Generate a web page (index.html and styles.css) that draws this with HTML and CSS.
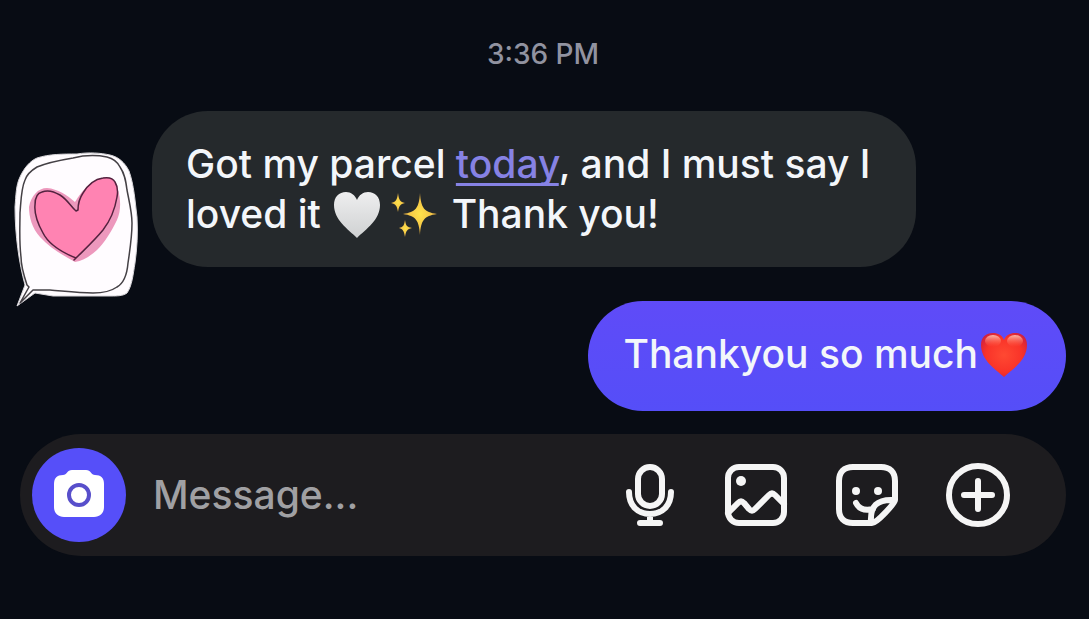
FILE: index.html
```html
<!DOCTYPE html>
<html lang="en">
<head>
<meta charset="utf-8">
<meta name="viewport" content="width=device-width, initial-scale=1">
<title>Chat</title>
<link rel="stylesheet" href="styles.css">
</head>
<body>
<main class="chat">
  <time class="timestamp" datetime="15:36">3:36 PM</time>

  <section class="thread" aria-label="Messages">
    <div class="row">
      <svg class="avatar" viewBox="0 0 127 156" role="img" aria-label="Pink heart in a speech bubble">
        <path d="M24 7C36 3 50 3 64 3C76 1 88 2 97 4C106 6 112 12 116 20C121 34 122 50 124 66C125 82 124 98 122 112C120 124 119 135 114 142C110 145 104 145 98 145L40 145L22 142L4 155L12 134C6 112 2 84 2 56C3 44 3 34 7 26C11 17 17 10 24 7Z" fill="#fffcff" stroke="#d8d6da"/>
        <path d="M16 56C18 45 25 37 34 37C45 38 54 44 62 51C70 38 79 29 90 27C99 26 105 31 105 39C108 49 108 60 104 69C98 81 92 91 84 99C77 105 70 110 62 111C49 104 36 96 27 86C19 77 16 66 16 56Z" fill="#ed98bd"/>
        <path d="M62 109C48 101 36 94 30 82C25 73 21 64 22 54C22 47 24 42 29 41C36 38 42 41 47 44C55 49 59 57 64 61C65 54 66 48 70 42C76 32 83 28 90 27C96 26 100 27 102 31C105 36 105 41 104 46C102 58 97 70 90 79C81 90 71 99 62 109Z" fill="#ff83b2"/>
        <path d="M63 107C48 101 36 94 30 82C25 73 21 64 22 54C22 47 24 42 29 41C36 38 42 41 47 44C55 49 58 56 63 60L65 59C65 54 66 48 70 42C76 32 83 28 90 27C96 26 100 27 102 31C105 36 105 41 104 46C102 58 97 70 90 79C81 90 71 99 61 109" fill="none" stroke="#54223f" stroke-width="1.5" stroke-linecap="round" stroke-linejoin="round"/>
        <path d="M14 134C11 125 8 116 8 106C6 90 7 76 7 62C8 50 8 38 12 29C14 23 19 19 24 16C36 11 48 9 60 7C72 4 84 4 94 6C102 8 105 12 107 16C112 23 113 31 114 39C116 50 119 61 119 72C119 86 117 99 115 112C114 124 111 132 104 136C97 141 89 142 80 142C65 142 50 140 37 139L20 139L7 152L16 136Z" fill="none" stroke="#444045" stroke-width="1.5" stroke-linejoin="round"/>
      </svg>
      <p class="bubble received">Got my parcel <a class="day" href="#">today</a>, and I must say I loved it
        <svg class="emoji" viewBox="0 0 48 48" role="img" aria-label="white heart">
          <defs><linearGradient id="silver" x2="0" y2="1"><stop stop-color="#eeeeef"/><stop offset="1" stop-color="#cfd1d2"/></linearGradient></defs>
          <path d="M24 47C15 38 1 29 1 14C1 6 6 1 13 1C18 1 22 4 24 9C26 4 30 1 35 1C42 1 47 6 47 14C47 29 33 38 24 47Z" fill="url(#silver)"/>
        </svg><svg class="emoji sparkles" viewBox="0 0 48 48" role="img" aria-label="sparkles">
          <defs><radialGradient id="gold"><stop stop-color="#ffe34b"/><stop offset="1" stop-color="#efb544"/></radialGradient></defs>
          <g fill="url(#gold)"><path d="M29 2C30 17 33 21 46 23C33 25 30 29 29 44C28 29 25 25 12 23C25 21 28 17 29 2Z"/><path d="M7 2C8 9 9 11 14 12C9 13 8 15 7 21C6 15 5 13 0 12C5 11 6 9 7 2Z"/><path d="M14 29C15 35 16 36 21 37C16 38 15 40 14 46C13 40 12 38 8 37C12 36 13 35 14 29Z"/></g>
        </svg>
        Thank you!</p>
    </div>

    <p class="bubble sent">Thankyou so much<svg class="emoji" viewBox="0 0 48 48" role="img" aria-label="red heart">
      <defs>
        <radialGradient id="red" cx=".5" cy=".5" r=".6"><stop stop-color="#ff4932"/><stop offset=".65" stop-color="#f93329"/><stop offset="1" stop-color="#cf2140"/></radialGradient>
        <linearGradient id="shine" x2="0" y2="1"><stop stop-color="#ffb6a6"/><stop offset="1" stop-color="#ff6047" stop-opacity="0"/></linearGradient>
      </defs>
      <path d="M24 46C15 38 1 29 1 14C1 6 6 2 13 2C18 2 22 4 24 9C26 4 30 2 35 2C42 2 47 6 47 14C47 29 33 38 24 46Z" fill="url(#red)"/>
      <ellipse cx="13" cy="10" rx="8" ry="6" fill="url(#shine)"/><ellipse cx="35" cy="10" rx="8" ry="6" fill="url(#shine)"/>
    </svg></p>
  </section>

  <form class="composer">
    <button class="camera" type="button" aria-label="Camera">
      <svg viewBox="0 0 52 50" width="52" height="50">
        <path d="M19 0H33C38 0 38 5 42 5C48 5 51 8 51 14V37C51 43 47 47 41 47H11C5 47 1 43 1 37V14C1 8 4 5 10 5C14 5 14 0 19 0Z" fill="#fff"/>
        <circle cx="26" cy="25" r="10" fill="none" stroke="#584fcb" stroke-width="4"/>
      </svg>
    </button>
    <input class="message" type="text" placeholder="Message..." aria-label="Message">
    <div class="tools">
      <button type="button" aria-label="Voice message">
        <svg viewBox="0 0 52 64" width="52" height="64"><rect x="13" y="4" width="24" height="39" rx="12"/><path d="M4 29C4 43 13 51 25 51S46 43 46 29M25 51V59M15 60H35"/></svg>
      </button>
      <button type="button" aria-label="Photo">
        <svg viewBox="0 0 64 64" width="64" height="64"><rect x="4" y="4" width="56" height="56" rx="11"/><path d="M4 50L14 40Q17 37 20 40L25 46Q28 49 31 46L45 32Q48 29 51 32L60 41"/><circle class="dot" cx="17" cy="18" r="5"/></svg>
      </button>
      <button type="button" aria-label="Sticker">
        <svg viewBox="0 0 64 64" width="64" height="64"><path d="M37 60H18C9 60 4 55 4 46V18C4 9 9 4 18 4H46C55 4 60 9 60 18V37C60 40 42 60 37 60ZM36 59C35 43 42 36 59 37M21 40C24 46 30 48 38 46"/><circle class="dot" cx="21" cy="28" r="4"/><circle class="dot" cx="43" cy="28" r="4"/></svg>
      </button>
      <button type="button" aria-label="More options">
        <svg viewBox="0 0 64 64" width="64" height="64"><circle cx="32" cy="32" r="29"/><path d="M32 18V46M18 32H46"/></svg>
      </button>
    </div>
  </form>
</main>
</body>
</html>
```
FILE: styles.css
```css
* {
  box-sizing: border-box;
}

body {
  margin: 0;
  background: #080c14;
  color: #f3f6fa;
  font-family: Inter, "Liberation Sans", sans-serif;
}

.chat {
  display: flex;
  flex-direction: column;
  min-height: 100vh;
  padding: 38px 23px 63px 20px;
}

.timestamp {
  align-self: center;
  color: #9193a0;
  font-size: 28px;
  font-weight: 500;
  line-height: 32px;
}

.thread {
  display: flex;
  flex-direction: column;
  gap: 34px;
  margin: 41px 0 23px;
}

.row {
  display: flex;
  align-items: flex-end;
  gap: 12px;
  margin-left: -7px;
}

.avatar {
  flex: none;
  width: 127px;
  height: 156px;
  margin-bottom: -40px;
}

.bubble {
  margin: 0;
  font-size: 39px;
  font-weight: 500;
  line-height: 50px;
}

.received {
  max-width: 764px;
  padding: 28px 34px;
  border-radius: 56px;
  background: #25292c;
}

.sent {
  align-self: flex-end;
  padding: 28px 38px 32px 35px;
  border-radius: 55px;
  background: linear-gradient(#5f4bf8, #554ef8);
}

.day {
  color: #8682e4;
  text-decoration-thickness: 3px;
  text-underline-offset: 5px;
  text-decoration-skip-ink: none;
}

.emoji {
  width: 48px;
  height: 48px;
  margin: -6px 0 -2px 2px;
  vertical-align: middle;
}

.sparkles {
  margin-right: 2px;
  margin-left: 10px;
}

.composer {
  display: flex;
  align-items: center;
  padding: 14px 56px 14px 12px;
  border-radius: 61px;
  background: #1d1c1f;
}

button {
  display: flex;
  flex: none;
  align-items: center;
  justify-content: center;
  padding: 0;
  border: 0;
  background: none;
  cursor: pointer;
}

.camera {
  width: 94px;
  height: 94px;
  border-radius: 50%;
  background: #564ff9;
}

.message {
  flex: 1;
  min-width: 0;
  margin-left: 27px;
  padding: 0;
  border: 0;
  outline: 0;
  background: none;
  color: #f3f6fa;
  font: 500 39px/48px Inter, "Liberation Sans", sans-serif;
}

.message::placeholder {
  color: #a0a0a3;
  opacity: 1;
}

.tools {
  display: flex;
  gap: 47px;
}

.tools svg {
  fill: none;
  stroke: #f5f5f5;
  stroke-width: 6;
  stroke-linecap: round;
  stroke-linejoin: round;
}

.tools .dot {
  fill: #f5f5f5;
  stroke: none;
}
```
